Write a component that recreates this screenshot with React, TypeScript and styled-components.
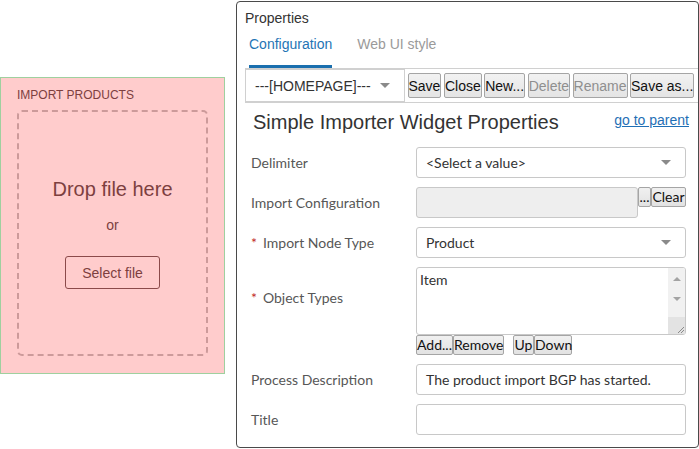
import React from 'react';
import styled, { createGlobalStyle } from 'styled-components';

const GlobalStyle = createGlobalStyle`
    html, body {
        margin: 0;
        padding: 0;
        background: #ffffff;
    }
    body {
        font-family: "Liberation Sans", Arial, sans-serif;
        color: #333;
    }
`;

const Page = styled.div`
    display: flex;
    align-items: flex-start;
    width: 699px;
    height: 449px;
    overflow: hidden;
`;

/* ---------- import products drop zone ---------- */

const ImportPanel = styled.div`
    margin-top: 77px;
    width: 225px;
    height: 297px;
    flex-shrink: 0;
    box-sizing: border-box;
    border: 1px solid #9fd09f;
    background-color: #ffcccc;
    padding: 9px 16px 17px 16px;
    display: flex;
    flex-direction: column;
    color: #7d3f3f;
`;
const ImportTitle = styled.div`
    font-size: 12px;
    line-height: 16px;
    margin-bottom: 7px;
`;
const DropZone = styled.div`
    flex: 1;
    border: 2px dashed #cc9a9a;
    border-radius: 5px;
    display: flex;
    flex-direction: column;
    align-items: center;
    padding-top: 65px;
`;
const DropText = styled.div`
    font-size: 20px;
    line-height: 24px;
`;
const OrText = styled.div`
    font-size: 14px;
    line-height: 18px;
    margin-top: 15px;
`;
const SelectFileButton = styled.button`
    margin-top: 22px;
    width: 95px;
    height: 33px;
    border: 1px solid #8b4a4a;
    border-radius: 3px;
    background: transparent;
    color: #7d3f3f;
    font-family: "Liberation Sans", Arial, sans-serif;
    font-size: 14px;
    padding: 0;
`;

/* ---------- properties panel ---------- */

const PropsPanel = styled.div`
    margin-left: 11px;
    margin-top: 1px;
    width: 463px;
    height: 447px;
    flex-shrink: 0;
    box-sizing: border-box;
    border: 1px solid #4a4a4a;
    border-radius: 4px;
    background: #fff;
    display: flex;
    flex-direction: column;
`;
const PanelTitle = styled.div`
    font-size: 14px;
    line-height: 18px;
    padding: 7px 0 0 8px;
    color: #333;
`;
const TabRow = styled.div`
    display: flex;
    gap: 25px;
    padding: 8px 0 0 12px;
`;
const Tab = styled.div<{ active?: boolean }>`
    font-size: 14px;
    line-height: 18px;
    padding-bottom: 12px;
    color: ${p => (p.active ? '#1f75b5' : '#9a9a9a')};
    border-bottom: 3px solid ${p => (p.active ? '#1a6fae' : 'transparent')};
`;
const Toolbar = styled.div`
    margin-left: 8px;
    height: 33px;
    border-top: 1px solid #d0d0d0;
    border-bottom: 1px solid #d0d0d0;
    display: flex;
    align-items: center;
    gap: 2.5px;
`;
const ToolbarSelect = styled.div`
    width: 160px;
    height: 33px;
    flex-shrink: 0;
    box-sizing: border-box;
    border: 1px solid #d0d0d0;
    display: flex;
    align-items: center;
    justify-content: space-between;
    padding: 0 14px 0 9px;
    font-size: 14px;
    color: #333;
    white-space: nowrap;
`;
const Caret = styled.span`
    width: 0;
    height: 0;
    border-left: 5px solid transparent;
    border-right: 5px solid transparent;
    border-top: 5px solid #8a8a8a;
`;
const ToolButton = styled.button<{ disabled?: boolean }>`
    height: 25px;
    flex-shrink: 0;
    padding: 0;
    white-space: nowrap;
    border: 1px solid #a5a5a5;
    border-radius: 2px;
    background: linear-gradient(#f2f2f2, #e4e4e4);
    font-family: "Liberation Sans", Arial, sans-serif;
    font-size: 14px;
    color: ${p => (p.disabled ? '#8f8f8f' : '#111')};
`;

const HeadingRow = styled.div`
    display: flex;
    align-items: flex-start;
    justify-content: space-between;
    padding: 7px 9px 0 16px;
    height: 36px;
`;
const Heading = styled.div`
    font-size: 20px;
    line-height: 24px;
    color: #333;
`;
const ParentLink = styled.a`
    font-size: 14px;
    line-height: 18px;
    margin-top: 1px;
    color: #1f6fb5;
    text-decoration: underline;
`;

const Form = styled.div`
    display: grid;
    grid-template-columns: 165px 270px;
    row-gap: 9px;
    padding-top: 1px;
    padding-left: 14px;
    font-family: Lato, "Open Sans", sans-serif;
    font-size: 14px;
`;
const Label = styled.div<{ top?: number }>`
    color: #575757;
    line-height: 18px;
    align-self: ${p => (p.top ? 'start' : 'center')};
    margin-top: ${p => (p.top ? `${p.top}px` : '0')};
`;
const Star = styled.span`
    color: #c22a2a;
    margin-right: 6px;
`;
const Field = styled.div<{ disabled?: boolean }>`
    height: 31px;
    box-sizing: border-box;
    border: 1px solid #c8c8c8;
    border-radius: 3px;
    background: ${p => (p.disabled ? '#eeeeee' : '#fff')};
    display: flex;
    align-items: center;
    justify-content: space-between;
    padding: 0 14px 0 9px;
    color: #333;
    flex: 1;
`;
const InlineRow = styled.div`
    display: flex;
    align-items: flex-start;
`;
const SmallButton = styled.button<{ w?: number }>`
    height: 20px;
    ${p => (p.w ? `width: ${p.w}px;` : '')}
    flex-shrink: 0;
    padding: 0;
    border: 1px solid #a5a5a5;
    border-radius: 2px;
    background: linear-gradient(#f0f0f0, #e2e2e2);
    font-family: Lato, "Open Sans", sans-serif;
    font-size: 14px;
    line-height: 16px;
    color: #111;
`;
const ListBox = styled.div`
    height: 68px;
    box-sizing: border-box;
    border: 1px solid #c8c8c8;
    border-radius: 3px;
    display: flex;
    overflow: hidden;
`;
const ListItems = styled.div`
    flex: 1;
    padding: 3px 3px;
    line-height: 18px;
    color: #333;
`;
const ScrollBar = styled.div`
    width: 17px;
    background: #f1f1f1;
    display: flex;
    flex-direction: column;
    align-items: center;
`;
const ScrollArrow = styled.div<{ down?: boolean }>`
    margin-top: ${p => (p.down ? '16px' : '9px')};
    width: 0;
    height: 0;
    border-left: 4px solid transparent;
    border-right: 4px solid transparent;
    ${p => (p.down ? 'border-top: 4px solid #a3a3a3;' : 'border-bottom: 4px solid #a3a3a3;')}
`;
const Grip = styled.div`
    margin-top: auto;
    width: 100%;
    height: 17px;
    background: #e3e3e3;
    display: flex;
    align-items: flex-end;
    justify-content: flex-end;
`;
const ListButtons = styled.div`
    display: flex;
`;
const Spacer = styled.div`
    width: 9px;
`;

const App = () => {
    return <>
        <GlobalStyle />
        <Page>
            <ImportPanel>
                <ImportTitle>IMPORT PRODUCTS</ImportTitle>
                <DropZone>
                    <DropText>Drop file here</DropText>
                    <OrText>or</OrText>
                    <SelectFileButton>Select file</SelectFileButton>
                </DropZone>
            </ImportPanel>

            <PropsPanel>
                <PanelTitle>Properties</PanelTitle>
                <TabRow>
                    <Tab active>Configuration</Tab>
                    <Tab>Web UI style</Tab>
                </TabRow>
                <Toolbar>
                    <ToolbarSelect>---[HOMEPAGE]--- <Caret /></ToolbarSelect>
                    <ToolButton>Save</ToolButton>
                    <ToolButton>Close</ToolButton>
                    <ToolButton>New...</ToolButton>
                    <ToolButton disabled>Delete</ToolButton>
                    <ToolButton disabled>Rename</ToolButton>
                    <ToolButton>Save as...</ToolButton>
                </Toolbar>
                <HeadingRow>
                    <Heading>Simple Importer Widget Properties</Heading>
                    <ParentLink href="#">go to parent</ParentLink>
                </HeadingRow>
                <Form>
                    <Label>Delimiter</Label>
                    <Field>&lt;Select a value&gt; <Caret /></Field>

                    <Label>Import Configuration</Label>
                    <InlineRow>
                        <Field disabled />
                        <SmallButton w={13}>...</SmallButton>
                        <SmallButton w={35}>Clear</SmallButton>
                    </InlineRow>

                    <Label><Star>*</Star>Import Node Type</Label>
                    <Field>Product <Caret /></Field>

                    <Label top={22}><Star>*</Star>Object Types</Label>
                    <div>
                        <ListBox>
                            <ListItems>Item</ListItems>
                            <ScrollBar>
                                <ScrollArrow />
                                <ScrollArrow down />
                                <Grip>
                                    <svg width="10" height="10" viewBox="0 0 10 10">
                                        <path d="M9 3 L3 9 M9 6 L6 9" stroke="#8a8a8a" strokeWidth="1" />
                                    </svg>
                                </Grip>
                            </ScrollBar>
                        </ListBox>
                        <ListButtons>
                            <SmallButton w={37}>Add...</SmallButton>
                            <SmallButton w={51}>Remove</SmallButton>
                            <Spacer />
                            <SmallButton w={21}>Up</SmallButton>
                            <SmallButton w={38}>Down</SmallButton>
                        </ListButtons>
                    </div>

                    <Label>Process Description</Label>
                    <Field>The product import BGP has started.</Field>

                    <Label>Title</Label>
                    <Field />
                </Form>
            </PropsPanel>
        </Page>
    </>;
}

export default App;
